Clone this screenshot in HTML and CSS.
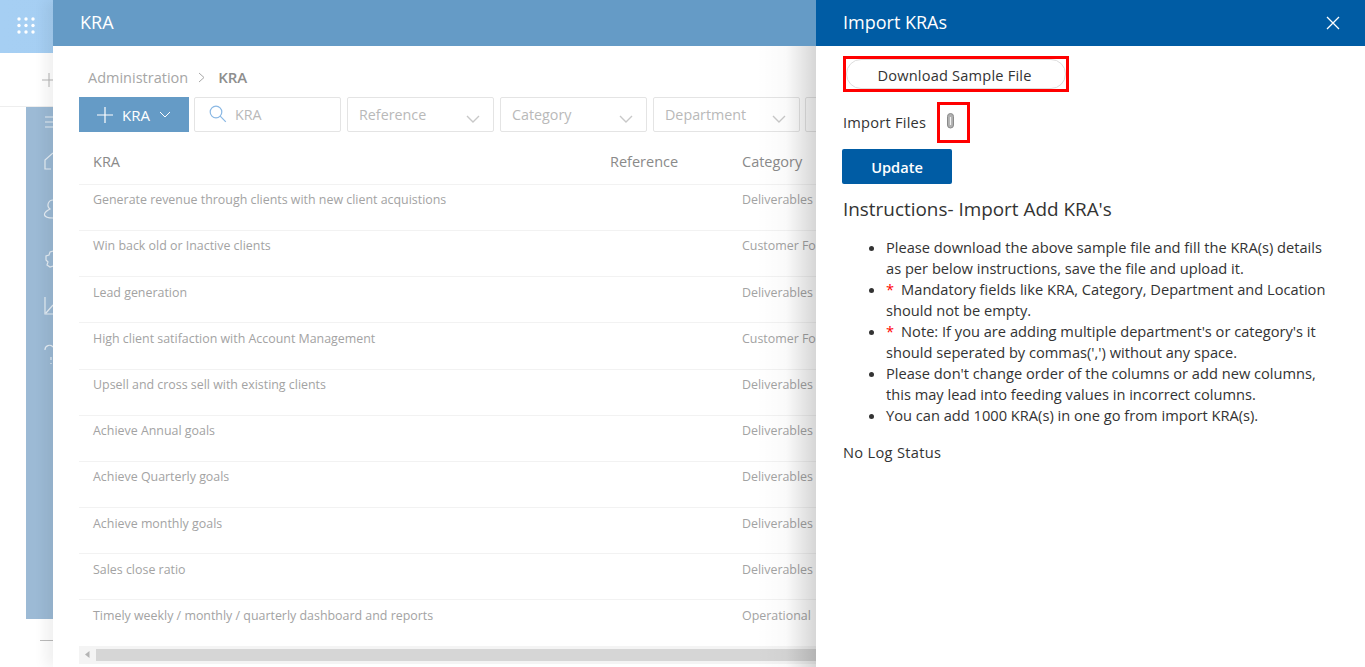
FILE: index.html
```html
<!DOCTYPE html>
<html lang="en">
<head>
<meta charset="utf-8">
<title>Import KRAs</title>
<link rel="stylesheet" href="styles.css">
</head>
<body>
<div class="backdrop">
  <div class="app-top">
    <svg class="apps" width="18" height="17" viewBox="0 0 18 17"><g fill="#fff"><circle cx="2" cy="2" r="1.7"/><circle cx="9" cy="2" r="1.7"/><circle cx="16" cy="2" r="1.7"/><circle cx="2" cy="8.500" r="1.7"/><circle cx="9" cy="8.500" r="1.7"/><circle cx="16" cy="8.500" r="1.7"/><circle cx="2" cy="15" r="1.7"/><circle cx="9" cy="15" r="1.7"/><circle cx="16" cy="15" r="1.7"/></g></svg>
  </div>
  <div class="app-sub"><svg width="12" height="14" viewBox="0 0 12 14"><path d="M7 0v14M0 7h12" stroke="#b5b5b5" fill="none"/></svg></div>
  <div class="rail">
    <svg width="27" height="260" viewBox="0 0 27 260" fill="none" stroke="#e6eef5" stroke-width="1.2">
      <path d="M19 10h8M19 15h8M19 20h8"/>
      <path d="M27 46l-8 7v9h6"/>
      <path d="M27 93a5 5 0 0 0-3 9c-3 2-6 3-5.500 6 .5 2 5 3 8.500 3"/>
      <path d="M27 144l-3 1-1 3-3 1v4l2 2-1 3 3 2 3-1"/>
      <path d="M19 190v17h8M20 206l7-8"/>
      <path d="M19 243a4.500 4.500 0 0 1 8-3M25 250v3M25 256v1"/>
    </svg>
  </div>
  <div class="app-foot"><span class="foot-line"></span></div>
</div>

<div class="stage">
  <main class="main">
    <header class="main-head">KRA</header>
    <nav class="crumbs">
      <span>Administration</span>
      <svg width="9" height="11" viewBox="0 0 9 11"><path d="M2 1l5 4.500L2 10" fill="none" stroke="#a8a8a8"/></svg>
      <b>KRA</b>
    </nav>
    <div class="filters">
      <button class="add">
        <svg width="16" height="16" viewBox="0 0 16 16"><path d="M8 0v16M0 8h16" stroke="#fff" stroke-width="1.2" fill="none"/></svg>
        <span>KRA</span>
        <svg width="12" height="7" viewBox="0 0 12 7"><path d="M1 1l5 5 5-5" stroke="#fff" fill="none"/></svg>
      </button>
      <div class="search">
        <svg width="18" height="18" viewBox="0 0 18 18"><circle cx="7" cy="7" r="5.800" fill="none" stroke="#8ab8e4" stroke-width="1.2"/><path d="M11.200 11.200l5.600 5.600" stroke="#8ab8e4" stroke-width="1.2"/></svg>
        <span>KRA</span>
      </div>
      <div class="select"><span>Reference</span><svg width="14" height="8" viewBox="0 0 14 8"><path d="M1 1l6 6 6-6" stroke="#c8c8c8" stroke-width="1.4" fill="none"/></svg></div>
      <div class="select"><span>Category</span><svg width="14" height="8" viewBox="0 0 14 8"><path d="M1 1l6 6 6-6" stroke="#c8c8c8" stroke-width="1.4" fill="none"/></svg></div>
      <div class="select"><span>Department</span><svg width="14" height="8" viewBox="0 0 14 8"><path d="M1 1l6 6 6-6" stroke="#c8c8c8" stroke-width="1.4" fill="none"/></svg></div>
      <div class="select last"></div>
    </div>
    <div class="table">
      <div class="row head"><span>KRA</span><span>Reference</span><span>Category</span></div>
      <div class="row"><span>Generate revenue through clients with new client acquistions</span><span></span><span>Deliverables</span></div>
      <div class="row"><span>Win back old or Inactive clients</span><span></span><span>Customer Focus</span></div>
      <div class="row"><span>Lead generation</span><span></span><span>Deliverables</span></div>
      <div class="row"><span>High client satifaction with Account Management</span><span></span><span>Customer Focus</span></div>
      <div class="row"><span>Upsell and cross sell with existing clients</span><span></span><span>Deliverables</span></div>
      <div class="row"><span>Achieve Annual goals</span><span></span><span>Deliverables</span></div>
      <div class="row"><span>Achieve Quarterly goals</span><span></span><span>Deliverables</span></div>
      <div class="row"><span>Achieve monthly goals</span><span></span><span>Deliverables</span></div>
      <div class="row"><span>Sales close ratio</span><span></span><span>Deliverables</span></div>
      <div class="row"><span>Timely weekly / monthly / quarterly dashboard and reports</span><span></span><span>Operational</span></div>
    </div>
    <div class="hscroll">
      <svg width="5" height="7" viewBox="0 0 5 7"><path d="M4.500 0v7L0 3.500z" fill="#b4b4b4"/></svg>
      <div class="thumb"></div>
    </div>
  </main>

  <aside class="side">
    <header class="side-head">
      <span>Import KRAs</span>
      <svg width="14" height="14" viewBox="0 0 14 14"><path d="M1 1l12 12M13 1L1 13" stroke="#fff" stroke-width="1.3" fill="none"/></svg>
    </header>
    <div class="side-body">
      <div class="download"><button class="pill">Download Sample File</button></div>
      <div class="import">
        <span class="import-label">Import Files</span>
        <span class="clip">
          <svg width="9" height="16" viewBox="0 0 9 16"><path d="M1.500 3.500a3 3 0 0 1 6 0V12a3 3 0 0 1-6 0z" fill="#b0b0b0" stroke="#8a8a8a" stroke-width="1"/><path d="M4.500 4v8" stroke="#f2f2f2" stroke-width="1.2"/></svg>
        </span>
      </div>
      <button class="update">Update</button>
      <h2 class="title">Instructions- Import Add KRA's</h2>
      <ul class="notes">
        <li>Please download the above sample file and fill the KRA(s) details as per below instructions, save the file and upload it.</li>
        <li><i>*</i>Mandatory fields like KRA, Category, Department and Location should not be empty.</li>
        <li><i>*</i>Note: If you are adding multiple department's or category's it should seperated by commas(',') without any space.</li>
        <li>Please don't change order of the columns or add new columns, this may lead into feeding values in incorrect columns.</li>
        <li>You can add 1000 KRA(s) in one go from import KRA(s).</li>
      </ul>
      <p class="log">No Log Status</p>
    </div>
  </aside>
</div>
</body>
</html>
```
FILE: styles.css
```css
* { box-sizing: border-box; }
html, body { margin: 0; height: 100%; }
body {
  position: relative;
  width: 1365px;
  height: 667px;
  overflow: hidden;
  background: #fff;
  font-family: "Open Sans", "Noto Sans", sans-serif;
  color: #333;
}
button { font-family: inherit; cursor: pointer; }

/* dimmed application behind the panels */
.backdrop { position: absolute; inset: 0; display: flex; flex-direction: column; }
.app-top {
  height: 53px;
  background: linear-gradient(90deg, #a6cff3, #9bc6ec);
  padding: 17px 0 0 17px;
}
.apps { display: block; }
.app-sub { height: 54px; border-bottom: 1px solid #eee; padding: 17px 0 0 42px; }
.rail { margin-left: 26px; width: 27px; height: 512px; background: #9cbad5; }
.rail svg { display: block; }
.app-foot { padding: 21px 0 0 40px; }
.foot-line { display: block; width: 13px; height: 1px; background: #bbb; }

/* panels */
.stage { position: absolute; left: 53px; top: 0; right: 0; bottom: 0; display: flex; box-shadow: -8px 0 12px rgba(0,0,0,.06); }
.main { position: relative; width: 763px; background: #fff; overflow: hidden; color: #a3a3a3; }
.main::after {
  content: "";
  position: absolute;
  top: 46px; right: 0; bottom: 0;
  width: 60px;
  background: linear-gradient(90deg, rgba(0,0,0,0) 0%, rgba(0,0,0,.02) 50%, rgba(0,0,0,.16) 100%);
  pointer-events: none;
}
.main-head {
  height: 46px;
  background: #659bc6;
  color: #fff;
  font-size: 18px;
  line-height: 44px;
  padding-left: 27px;
}
.crumbs {
  display: flex;
  align-items: center;
  gap: 9px;
  height: 51px;
  padding: 11px 0 0 35px;
  font-size: 14.5px;
  color: #a6a6a6;
}
.crumbs b { margin-left: 3px; font-size: 15px; color: #8e8e8e; font-weight: 600; }
.filters { display: flex; gap: 6px; height: 35px; padding-left: 26px; }
.add {
  flex: none;
  display: flex;
  align-items: center;
  width: 110px;
  height: 35px;
  margin-right: -1px;
  padding: 0 0 0 18px;
  border: 0;
  background: #659bc6;
  color: #fff;
  font-size: 15px;
  font-weight: 500;
}
.add span { margin: 0 9px 0 9px; }
.search, .select {
  flex: none;
  display: flex;
  align-items: center;
  width: 147px;
  height: 35px;
  border: 1px solid #e4e4e4;
  border-radius: 2px;
  font-size: 14.3px;
  color: #b9b9b9;
}
.search { padding-left: 14px; gap: 8px; }
.search svg { flex: none; margin-top: -1px; }
.select { justify-content: space-between; padding: 0 13px 0 11px; }
.select svg { margin-top: 9px; }
.select.last { margin-left: -1px; }
.table { margin: 6.8px 0 0 26px; width: 737px; }
.row {
  display: grid;
  grid-template-columns: 517px 132px 1fr;
  height: 46.2px;
  padding: 6.4px 0 0 14px;
  border-bottom: 1px solid #f2f2f2;
  font-size: 12.42px;
  line-height: 17px;
  white-space: nowrap;
}
.row.head {
  height: 46px;
  padding-top: 13px;
  line-height: 20px;
  font-size: 14.5px;
  font-weight: 500;
  color: #8a8a8a;
}
.hscroll {
  display: flex;
  align-items: center;
  height: 18px;
  margin: -0.8px 0 0 26px;
  padding-left: 6px;
  background: #f4f4f4;
}
.thumb { flex: 1; height: 12px; margin-left: 6px; background: #d6d6d6; }

.side { flex: none; width: 549px; background: #fff; position: relative; }
.side-head {
  display: flex;
  align-items: center;
  justify-content: space-between;
  height: 46px;
  padding: 0 25px 0 27px;
  background: #005ca4;
  color: #fff;
  font-size: 18px;
}
.side-head span { margin-top: -2px; }
.side-body { padding: 10px 26px 0 26px; font-size: 14.65px; color: #333; }
.download { width: 226px; height: 36px; margin-left: 1px; border: 3px solid #f00; }
.pill {
  display: block;
  width: 100%;
  height: 30px;
  padding: 1px 3px 0 0;
  background: #fff;
  border: 1px solid #ddd;
  border-radius: 15px;
  font-size: 14.6px;
  color: #333;
  letter-spacing: .2px;
}
.import { display: flex; align-items: center; margin: 10px 0 0 1px; height: 41px; letter-spacing: .22px; }
.import-label { margin-top: -2px; }
.clip {
  flex: none;
  display: flex;
  align-items: center;
  justify-content: flex-start;
  width: 33px;
  height: 41px;
  margin-left: 11px;
  padding-left: 6px;
  border: 3px solid #f00;
}
.clip svg { margin-top: -4px; }
.update {
  display: block;
  width: 110px;
  height: 35px;
  margin-top: 6px;
  padding: 1px 0 0;
  border: 0;
  border-radius: 2px;
  background: #005ca4;
  color: #fff;
  font-size: 14.6px;
  font-weight: 600;
}
.title { margin: 13px 0 0 1px; font-size: 18.9px; line-height: 24px; font-weight: 400; color: #333; }
.notes { margin: 16px 0 0; padding: 0 0 0 44px; font-size: 14.65px; line-height: 21px; }
.notes i { font-style: normal; color: #f00; margin-right: 7px; }
.log { margin: 16px 0 0 1px; font-weight: 500; letter-spacing: .3px; }
```
